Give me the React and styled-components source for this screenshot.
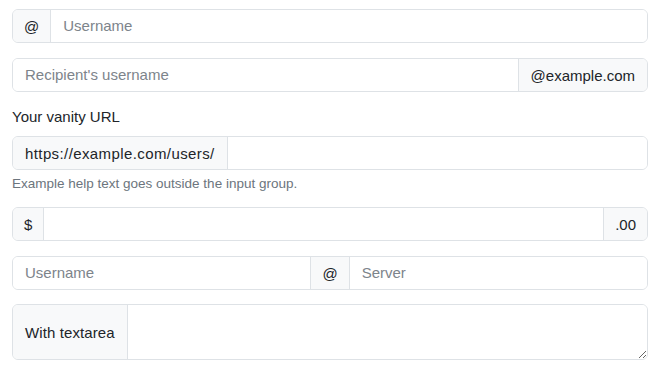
import styled, { createGlobalStyle } from "styled-components";

const GlobalStyle = createGlobalStyle`
  * {
    box-sizing: border-box;
  }

  body {
    margin: 0;
    background: #fff;
    font-family: "Liberation Sans", Arial, sans-serif;
    font-size: 15px;
    color: #212529;
  }
`;

const Page = styled.div`
  padding: 9px 10px 0 12px;
`;

const Field = styled.div`
  margin-bottom: ${(p) => p.$mb || 15}px;
`;

const Label = styled.label`
  display: block;
  font-size: 15px;
  line-height: 18px;
  margin-bottom: 10px;
`;

const Group = styled.div`
  display: flex;
  align-items: stretch;
  width: 100%;
  border: 1px solid #dee2e6;
  border-radius: 6px;
  overflow: hidden;
  height: ${(p) => p.$height || 34}px;
`;

const Addon = styled.span`
  display: flex;
  align-items: center;
  padding: 0 ${(p) => p.$pad || 12}px;
  background: #f8f9fa;
  color: #212529;
  white-space: nowrap;
  font-size: 15px;
  letter-spacing: ${(p) => p.$track || 0}px;
  border-left: 1px solid #dee2e6;

  &:first-child {
    border-left: 0;
  }
`;

const Input = styled.input`
  flex: 1 1 auto;
  min-width: 0;
  border: 0;
  border-left: 1px solid #dee2e6;
  padding: 6px 12px;
  font: inherit;
  font-size: 15px;
  line-height: 20px;
  color: #212529;
  background: #fff;
  outline: none;

  &:first-child {
    border-left: 0;
  }

  &::placeholder {
    color: #7d848b;
  }
`;

const TextArea = styled.textarea`
  flex: 1 1 auto;
  min-width: 0;
  border: 0;
  border-left: 1px solid #dee2e6;
  padding: 6px 12px;
  font: inherit;
  resize: vertical;
  outline: none;
`;

const Help = styled.div`
  margin-top: 7px;
  font-size: 13.5px;
  line-height: 14px;
  color: #6c757d;
`;

export default function App() {
  return (
    <Page>
      <GlobalStyle />
      <Field>
        <Group>
          <Addon $pad={11}>@</Addon>
          <Input placeholder="Username" />
        </Group>
      </Field>

      <Field $mb={16}>
        <Group>
          <Input placeholder="Recipient's username" />
          <Addon>@example.com</Addon>
        </Group>
      </Field>

      <Field $mb={16}>
        <Label>Your vanity URL</Label>
        <Group>
          <Addon $track={0.4}>https://example.com/users/</Addon>
          <Input />
        </Group>
        <Help>Example help text goes outside the input group.</Help>
      </Field>

      <Field>
        <Group>
          <Addon $pad={11}>$</Addon>
          <Input />
          <Addon $pad={11}>.00</Addon>
        </Group>
      </Field>

      <Field $mb={14}>
        <Group>
          <Input placeholder="Username" />
          <Addon $pad={11}>@</Addon>
          <Input placeholder="Server" />
        </Group>
      </Field>

      <Field>
        <Group $height={56}>
          <Addon $track={0.1}>With textarea</Addon>
          <TextArea />
        </Group>
      </Field>
    </Page>
  );
}
